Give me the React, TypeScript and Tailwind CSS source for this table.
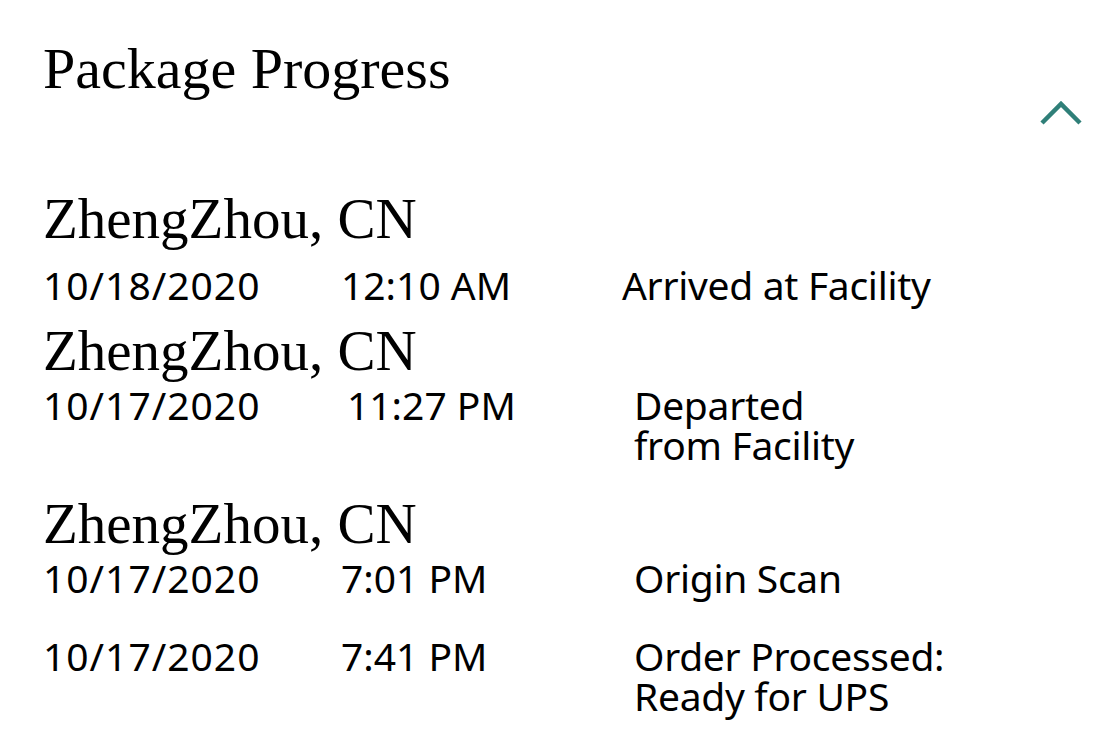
import React from "react";

const serif = "font-['Liberation_Serif','Times_New_Roman',serif]";
const sans = "font-['Noto_Sans','Open_Sans',sans-serif]";

function Row({
  date,
  time,
  desc,
  dateW,
  timeW,
  className,
}: {
  date: string;
  time: string;
  desc: React.ReactNode;
  dateW: string;
  timeW: string;
  className: string;
}) {
  return (
    <div className={`flex ${sans} text-[39px] leading-[40px] text-black ${className}`}>
      <div className={`${dateW} shrink-0 tracking-[1px]`}>{date}</div>
      <div className={`${timeW} shrink-0`}>{time}</div>
      <div className="tracking-[-0.3px]">{desc}</div>
    </div>
  );
}

function City({ className }: { className: string }) {
  return (
    <div className={`${serif} text-[57px] leading-[60px] text-black ${className}`}>
      ZhengZhou, CN
    </div>
  );
}

export default function App() {
  return (
    <div className="w-[1102px] h-[737px] bg-white overflow-hidden pl-[43px] pr-[18px] pt-[39px]">
      <div className="flex items-start justify-between">
        <h1 className={`${serif} text-[58px] leading-[60px] text-black font-normal`}>
          Package Progress
        </h1>
        <svg className="mt-[61px]" width="44" height="26" viewBox="0 0 44 26" fill="none">
          <polyline
            points="2,23 21,4 40,23"
            stroke="#2f7f78"
            strokeWidth="4.5"
            strokeLinecap="butt"
            strokeLinejoin="miter"
          />
        </svg>
      </div>

      <City className="mt-[63px]" />
      <Row
        className="mt-[16px]"
        date="10/18/2020"
        time="12:10 AM"
        dateW="w-[298px]"
        timeW="w-[281px]"
        desc="Arrived at Facility"
      />

      <City className="mt-[16px]" />
      <Row
        className="mt-[4px]"
        date="10/17/2020"
        time="11:27 PM"
        dateW="w-[304px]"
        timeW="w-[287px]"
        desc={
          <>
            <span className="block">Departed</span>
            <span className="block">from Facility</span>
          </>
        }
      />

      <City className="mt-[29px]" />
      <Row
        className="mt-[4px]"
        date="10/17/2020"
        time="7:01 PM"
        dateW="w-[298px]"
        timeW="w-[293px]"
        desc="Origin Scan"
      />
      <Row
        className="mt-[38px]"
        date="10/17/2020"
        time="7:41 PM"
        dateW="w-[298px]"
        timeW="w-[293px]"
        desc={
          <>
            <span className="block">Order Processed:</span>
            <span className="block">Ready for UPS</span>
          </>
        }
      />
    </div>
  );
}
